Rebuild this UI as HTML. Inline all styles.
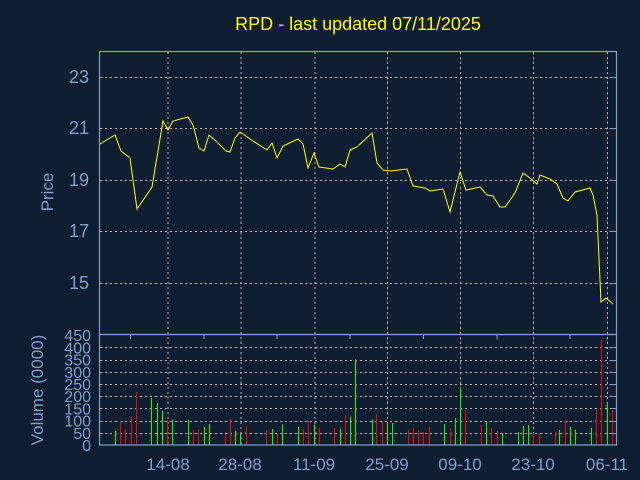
<!DOCTYPE html><html><head><style>body{margin:0;background:#0f1e30;}svg{display:block}</style></head><body>
<svg id="s" width="640" height="480" xmlns="http://www.w3.org/2000/svg" font-family="Liberation Sans, sans-serif">
<rect width="640" height="480" fill="#0f1e30"/>
<text x="358" y="30" fill="#ffff00" font-size="18" text-anchor="middle">RPD - last updated 07/11/2025</text>
<g id="grid" stroke="#b0b0b0" stroke-dasharray="2,3" stroke-width="1"></g>
<g id="vol"></g>
<polyline id="pl" fill="none" stroke="#ffff00" stroke-width="1"/>
<g stroke="#7f9fcf" fill="none" stroke-width="1.2">
<rect x="99.5" y="51.5" width="517" height="283"/>
<rect x="99.5" y="334.5" width="517" height="110.5"/>
</g>
<g id="ticks" stroke="#7f9fcf"></g>
<g fill="#7f9fcf" font-size="18" text-anchor="end">
<text x="89" y="83">23</text><text x="89" y="134">21</text><text x="89" y="186">19</text><text x="89" y="237">17</text><text x="89" y="289">15</text>
</g>
<g id="vl" fill="#7f9fcf" font-size="16" text-anchor="end"></g>
<g fill="#7f9fcf" font-size="17" text-anchor="middle">
<text x="168" y="470">14-08</text><text x="240" y="470">28-08</text><text x="314" y="470">11-09</text><text x="387" y="470">25-09</text><text x="460" y="470">09-10</text><text x="533" y="470">23-10</text><text x="607" y="470">06-11</text>
</g>
<text transform="translate(53,192) rotate(-90)" fill="#7f9fcf" font-size="17" text-anchor="middle">Price</text>
<text transform="translate(43,390) rotate(-90)" fill="#7f9fcf" font-size="17" text-anchor="middle">Volume (0000)</text>
</svg>
<script>
var N="http://www.w3.org/2000/svg";function L(g,x1,y1,x2,y2,c,w){var l=document.createElementNS(N,"line");l.setAttribute("x1",x1);l.setAttribute("y1",y1);l.setAttribute("x2",x2);l.setAttribute("y2",y2);if(c)l.setAttribute("stroke",c);if(w)l.setAttribute("stroke-width",w);document.getElementById(g).appendChild(l);}
var xs=[167.5,240.5,314.5,387,460,533,607];xs.forEach(function(x){L("grid",x+.5,52,x+.5,445);});
[77,128,180,231,283].forEach(function(y){L("grid",100,y+.5,616,y+.5);L("ticks",611,y+.5,616,y+.5);});
for(var i=1;i<9;i++){var y=445-i*12.2;L("grid",100,Math.round(y)+.5,616,Math.round(y)+.5);L("ticks",611,Math.round(y)+.5,616,Math.round(y)+.5);}
for(var i=0;i<10;i++){var t=document.createElementNS(N,"text");t.setAttribute("x",91);t.setAttribute("y",451-i*12.2);t.textContent=i*50;document.getElementById("vl").appendChild(t);}
[130.5,204,277,350,423.5,497,570].forEach(function(x){L("ticks",x,335,x,339);});
var p=[[90,144],[115,135],[121,151],[130,158],[137,209],[152,187],[163,121],[168,130],[173,121],[188,117],[193,125],[199,148],[204,151],[209,135],[217,142],[226,151],[230,152],[235,138],[240,132],[253,141],[267,150],[272,143],[277,158],[283,146],[298,139],[303,144],[308,168],[314,153],[319,167],[333,169],[340,164],[345,167],[350,150],[357,147],[372,133],[377,163],[383,170],[390,171],[407,169],[413,186],[425,188],[430,191],[443,189],[450,212],[460,172],[466,190],[480,187],[487,195],[493,196],[500,207],[505,207],[515,193],[523,173],[530,178],[537,184],[540,175],[550,179],[557,184],[563,198],[568,201],[575,192],[590,188],[593,195],[597,215],[601,302],[606,298],[613,304]];
p[0]=[100,144];document.getElementById("pl").setAttribute("points",p.map(function(a){return a.join(",")}).join(" "));
var v=[[74,303,1],[88,273,0],[103,297,0],[118,261,0],[135,186,0],[178,204,1],[196,219,1],[210,243,1],[225,270,0],[239,270,1],[286,270,1],[300,300,0],[315,297,0],[332,291,1],[347,285,1],[393,312,0],[408,267,0],[422,303,1],[436,309,1],[454,288,0],[512,300,0],[529,297,1],[544,309,0],[558,285,1],[605,291,1],[620,297,0],[634,273,0],[651,285,1],[666,294,0],[710,294,0],[727,297,1],[741,255,0],[756,261,1],[770,88,1],[818,270,1],[831,252,0],[849,276,0],[863,279,1],[878,279,1],[924,300,0],[939,294,0],[953,300,0],[968,306,0],[985,291,0],[1029,282,1],[1046,294,0],[1061,264,1],[1075,171,1],[1090,240,0],[1136,285,0],[1151,273,1],[1165,294,0],[1183,303,0],[1197,309,1],[1244,306,1],[1258,288,1],[1273,285,1],[1287,309,0],[1305,312,0],[1349,306,0],[1363,300,1],[1380,270,0],[1395,291,1],[1409,300,1],[1456,294,1],[1470,237,0],[1485,30,0],[1502,225,1],[1517,240,0]];
v.forEach(function(b){var x=Math.round(90+b[0]/2.904)+.5;L("vol",x,445,x,330+b[1]/3,b[2]?"#00ff00":"#ff0000",1);});
</script>
</body></html>
